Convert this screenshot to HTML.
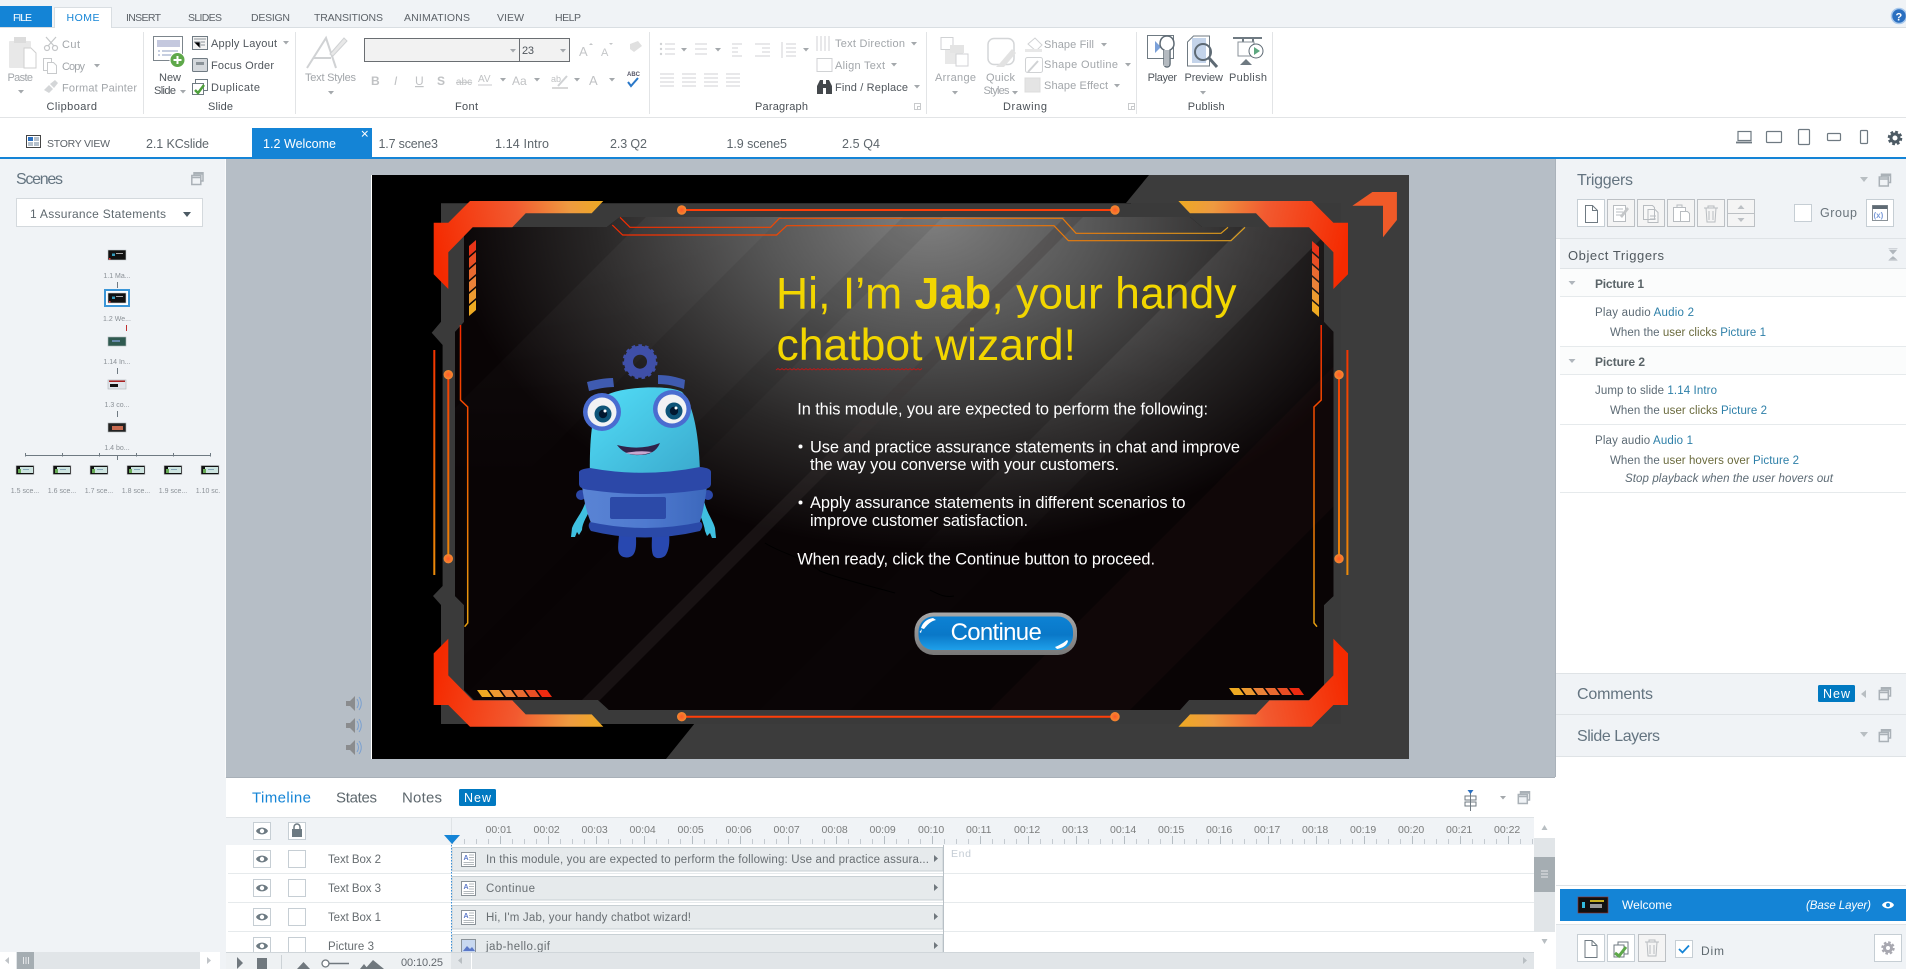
<!DOCTYPE html>
<html><head><meta charset="utf-8"><title>Storyline</title>
<style>
html,body{margin:0;padding:0;background:#fff;width:1906px;height:969px;overflow:hidden}
svg{display:block;position:absolute;left:0;top:0}
text{font-family:"Liberation Sans",sans-serif;font-size:11px;fill:#666c72;white-space:pre}
.r{font-size:11px;fill:#50565c}
.d{font-size:11px;fill:#a2a6aa}
.g{font-size:11px;fill:#4a5056}
.tb{font-size:10.5px;fill:#5c6268}
.st{font-size:12.5px;fill:#5e666c}
.h{font-size:16px;fill:#647480}
.tg{font-size:11.5px;fill:#5c6a74}
.bl{fill:#2d7fa8}
.ol{fill:#6a6a3c}
.tm{font-size:10.5px;fill:#7a7c7c}
.nm{font-size:11.5px;fill:#666c70}
.br{font-size:11.5px;fill:#686e72}
.sm{font-size:7px;fill:#8a9096}
.w{fill:#fff}
.sl{font-size:16.4px;fill:#fff}
.ti{font-size:44.5px;fill:#f2d600}
</style></head><body>
<svg width="1906" height="969" viewBox="0 0 1906 969" xmlns="http://www.w3.org/2000/svg">
<defs>
<path id="c" d="M-3 0h6l-3 3.5z" fill="#a4a8ac"/>
<g id="dock" fill="none" stroke="#aab1b7" stroke-width="1.5"><path d="M3 3V.8h9V9h-2"/><rect x=".8" y="3.5" width="9" height="9" fill="#f0f3f6"/><path d="M.8 5.5h9M3 2h9" /></g>
<g id="eye"><path d="M-6 0C-4-4.5 4-4.5 6 0C4 4.5-4 4.5-6 0z" fill="#6d7a82"/><circle r="2.2" fill="#fff"/></g>
<g id="page"><path d="M0 0h7l5 5v12H0z" fill="#fff" stroke="#6f7a82"/><path d="M7 0v5h5" fill="none" stroke="#6f7a82"/></g>
<g id="tbox"><rect x=".5" y=".5" width="14" height="14" fill="#fff" stroke="#8a9298"/><text x="2.5" y="8" style="font-size:7px;fill:#5a78c8;font-weight:bold">A</text><path d="M8 3h5M8 5.5h5M8 8h5M2.5 10.5h10.5M2.5 12.5h10.5" stroke="#9aa2a8" stroke-width=".8"/></g>
<linearGradient id="oh" gradientUnits="userSpaceOnUse" x1="434" x2="603" y1="240" y2="200"><stop offset="0" stop-color="#f52a00"/><stop offset=".5" stop-color="#f25a30"/><stop offset=".8" stop-color="#ee9a40"/><stop offset="1" stop-color="#edaa22"/></linearGradient>
<linearGradient id="cir" gradientUnits="userSpaceOnUse" x1="612" x2="1245" y1="0" y2="0"><stop offset="0" stop-color="#f52a00"/><stop offset=".6" stop-color="#f06a00"/><stop offset="1" stop-color="#dca020"/></linearGradient>
<linearGradient id="vl" gradientUnits="userSpaceOnUse" x1="0" x2="0" y1="325" y2="627"><stop offset="0" stop-color="#f52a00"/><stop offset=".55" stop-color="#f06a00"/><stop offset="1" stop-color="#e8a010"/></linearGradient>
<radialGradient id="dot"><stop offset="0" stop-color="#ff5a28"/><stop offset="1" stop-color="#f28a30"/></radialGradient>
<radialGradient id="pan" gradientUnits="userSpaceOnUse" cx="0" cy="0" r="1" gradientTransform="translate(930 215) scale(480 335)"><stop offset="0" stop-color="#808080"/><stop offset=".35" stop-color="#565656"/><stop offset=".7" stop-color="#282626"/><stop offset="1" stop-color="#090405"/></radialGradient>
<linearGradient id="fb" gradientUnits="userSpaceOnUse" x1="0" x2="0" y1="217" y2="560"><stop offset="0" stop-color="#fff" stop-opacity=".09"/><stop offset="1" stop-color="#fff" stop-opacity=".004"/></linearGradient>
<linearGradient id="fa" gradientUnits="userSpaceOnUse" x1="0" x2="0" y1="217" y2="480"><stop offset="0" stop-color="#fff" stop-opacity=".04"/><stop offset="1" stop-color="#fff" stop-opacity="0"/></linearGradient>
<clipPath id="pc"><polygon points="472,227 607,227 620,217 1190,217 1202,227 1309,227 1324,242 1324,322 1333.5,332 1333.5,596 1324,605 1324,685 1309,700 1189,700 1180,710 609,710 598,700 474,700 464,690 464,605 455,596 455,332 464,322 464,235"/></clipPath>
<linearGradient id="body" x1="0" x2="1" y1="0" y2="1"><stop offset="0" stop-color="#52def8"/><stop offset="1" stop-color="#3aa8cc"/></linearGradient>
<linearGradient id="skirt" x1="0" x2="1" y1="0" y2="0"><stop offset="0" stop-color="#5a84d4"/><stop offset=".5" stop-color="#4f7ad0"/><stop offset="1" stop-color="#3c68bc"/></linearGradient>
<linearGradient id="btn" x1="0" x2="0" y1="0" y2="1"><stop offset="0" stop-color="#0c82d4"/><stop offset=".55" stop-color="#0a78c8"/><stop offset="1" stop-color="#1ea0ea"/></linearGradient>
<linearGradient id="btb" x1="0" x2="0" y1="0" y2="1"><stop offset="0" stop-color="#a8a8a8"/><stop offset="1" stop-color="#787878"/></linearGradient>
<pattern id="ts" x="452" y="0" width="12" height="10" patternUnits="userSpaceOnUse"><rect width="1" height="10" fill="#c4cad0"/></pattern>
<pattern id="tl" x="452" y="0" width="48" height="10" patternUnits="userSpaceOnUse"><rect width="1" height="10" fill="#b4bcc2"/></pattern>
<g id="thA"><rect x="-9" y="-5" width="18" height="10" fill="#111" stroke="#c4c8cc" stroke-width=".6"/><rect x="-5" y="-1.5" width="3" height="2.5" fill="#39b"/><rect x="-1" y="-2" width="7" height="1" fill="#aaa"/><rect x="-8" y="3" width="1.5" height="1.5" fill="#e33"/></g>
<g id="thB"><rect x="-9" y="-4.5" width="18" height="9" fill="#111" stroke="#c8ccd0" stroke-width=".6"/><rect x="-5" y="-3" width="13" height="6" fill="#cde4e0"/><rect x="-7" y="-1" width="3" height="4" fill="#6a5"/><rect x="-2" y="-1" width="6" height="1" fill="#8ab"/></g>
</defs>

<!-- base backgrounds -->
<rect width="1906" height="969" fill="#fff"/>
<rect width="1906" height="27" fill="#f0f3f6"/>
<rect y="27" width="1906" height="1" fill="#d9dee2"/>
<rect y="117" width="1906" height="1" fill="#e2e4e6"/>
<rect y="157" width="1906" height="2" fill="#1484d6"/>

<!-- top tabs -->
<rect x="0" y="6" width="52" height="21" fill="#1484d6"/>
<path d="M54.500 28V7.500H111.500V28" fill="#fff" stroke="#d9dee2"/>
<text x="13" y="21" textLength="19" class="tb w" style="fill:#fff">FILE</text>
<text x="66.500" y="21" textLength="33" class="tb" style="fill:#1484d6">HOME</text>
<text x="126" y="21" textLength="35" class="tb">INSERT</text>
<text x="188" y="21" textLength="34" class="tb">SLIDES</text>
<text x="251" y="21" textLength="39" class="tb">DESIGN</text>
<text x="314" y="21" textLength="69" class="tb">TRANSITIONS</text>
<text x="404" y="21" textLength="66" class="tb">ANIMATIONS</text>
<text x="497" y="21" textLength="27" class="tb">VIEW</text>
<text x="555" y="21" textLength="26" class="tb">HELP</text>
<circle cx="1899" cy="16" r="7.500" fill="#2a6fc0" stroke="#a8c8ec" stroke-width="1.500"/><text x="1895.500" y="20.500" style="font-size:11px;font-weight:bold;fill:#fff">?</text>

<!-- ribbon separators -->
<path d="M143.500 32V114M295.500 32V114M649.500 32V114M926.500 32V114M1136.500 32V114M1272.500 32V114" stroke="#e2e4e6"/>

<!-- clipboard -->
<rect x="9" y="41" width="22" height="27" fill="#e8e8e8" rx="1"/><rect x="14" y="37" width="12" height="6" fill="#dcdcdc"/><path d="M24 48h7l5 5v15H24z" fill="#fff" stroke="#cfcfcf"/>
<text x="7.500" y="81" textLength="25.500" class="d">Paste</text><use href="#c" x="21" y="90"/>
<g fill="none" stroke="#c4c6c8" stroke-width="1.200"><circle cx="47" cy="48" r="2.500"/><circle cx="55" cy="48" r="2.500"/><path d="M48 46L56 37M54 46L46 37"/></g>
<text x="62" y="48" textLength="18" class="d">Cut</text>
<g fill="#fff" stroke="#c8cacc"><path d="M43.500 58.500h8v12h-8z"/><path d="M47.500 62.500h6l3 3v8h-9z"/></g>
<text x="62" y="70" textLength="23" class="d">Copy</text><use href="#c" x="97" y="64"/>
<path d="M44 90l5-5 4 4-4 4zM50 84l5-4 3 3-4 5z" fill="#d4d6d8"/>
<text x="62" y="91.500" textLength="75" class="d">Format Painter</text>
<text x="46.500" y="110" textLength="50.500" class="g">Clipboard</text>

<!-- slide group -->
<rect x="153.500" y="36.500" width="29" height="24" fill="#fff" stroke="#7c858c"/><rect x="157" y="40" width="23" height="7" fill="#c4c8de"/><path d="M158 51h2M162 51h16M158 55h2M162 55h16" stroke="#8d9cc0"/>
<circle cx="177.500" cy="60" r="7.500" fill="#5ea84a" stroke="#fff"/><path d="M177.500 56v8M173.500 60h8" stroke="#fff" stroke-width="2"/>
<text x="159" y="81" textLength="22" class="r">New</text><text x="154" y="94" textLength="22" class="r">Slide</text><use href="#c" x="183" y="90"/>
<rect x="192.500" y="36.500" width="15" height="13" fill="#f4f4f4" stroke="#6f7a82"/><path d="M194 39h12M194 42h6v6M201 42h4M201 45h4" stroke="#8a9298"/>
<text x="211" y="47" textLength="66" class="r">Apply Layout</text><use href="#c" x="286" y="41"/>
<rect x="192.500" y="58.500" width="15" height="13" rx="1" fill="#d4d8dc" stroke="#6f7a82"/><rect x="196" y="62" width="8" height="3" fill="#8a9298"/>
<text x="211" y="69" textLength="63" class="r">Focus Order</text>
<rect x="195.500" y="79.500" width="12" height="11" fill="#fff" stroke="#6f7a82"/><rect x="192.500" y="83.500" width="11" height="11" fill="#fff" stroke="#6f7a82"/><path d="M195 90l3 3 6-8" stroke="#4ea03a" stroke-width="2.500" fill="none"/>
<text x="211" y="91" textLength="49" class="r">Duplicate</text>
<text x="208" y="110" textLength="25" class="g">Slide</text>

<!-- font -->
<path d="M307 68L326 38 336 68M313 58H331" fill="none" stroke="#d0d2d4" stroke-width="2"/><path d="M330 54l14-16 3 3-14 15z" fill="#e8e8e8" stroke="#d0d2d4"/>
<text x="305" y="81" textLength="51" class="d">Text Styles</text><use href="#c" x="331" y="91"/>
<rect x="364.500" y="38.500" width="155" height="23" fill="#f2f2f2" stroke="#6a6e72"/><rect x="519.500" y="38.500" width="50" height="23" fill="#f2f2f2" stroke="#6a6e72"/>
<use href="#c" x="513" y="49"/><use href="#c" x="563" y="49"/>
<text x="522" y="54" textLength="12" class="r">23</text>
<text x="579" y="56" style="font-size:13px;fill:#c4c6c8">A</text><path d="M589 45l2-2 2 2" fill="#c4c6c8"/>
<text x="601" y="56" style="font-size:11px;fill:#c4c6c8">A</text><path d="M609 43l2 2 2-2" fill="#c4c6c8"/>
<path d="M630 44l8-3 4 5-8 6-4-3z" fill="#e0e0e0"/>
<text x="371" y="85" style="font-size:12px;font-weight:bold;fill:#c0c2c4">B</text>
<text x="394" y="85" style="font-size:12px;font-style:italic;fill:#c0c2c4">I</text>
<text x="415" y="85" style="font-size:12px;fill:#c0c2c4;text-decoration:underline">U</text>
<text x="437" y="85" style="font-size:12px;font-weight:bold;fill:#c0c2c4">S</text>
<text x="456" y="85" style="font-size:10px;fill:#c0c2c4;text-decoration:line-through">abc</text>
<text x="478" y="82" style="font-size:10px;fill:#c0c2c4">AV</text>
<text x="512" y="85" style="font-size:12px;fill:#c0c2c4">Aa</text>
<text x="551" y="82" style="font-size:9px;fill:#c0c2c4">ab</text>
<text x="589" y="85" style="font-size:13px;fill:#c0c2c4">A</text>
<path d="M478 85h14" stroke="#c8cacc"/><path d="M552 88h16" stroke="#d8d8d8" stroke-width="2"/><path d="M558 86l9-10" stroke="#d0d2d4" stroke-width="2"/>
<use href="#c" x="503" y="78"/><use href="#c" x="537" y="78"/><use href="#c" x="577" y="78"/><use href="#c" x="612" y="78"/>
<text x="627" y="76" style="font-size:6px;font-weight:bold;fill:#556">ABC</text><path d="M628 82l3 4 7-8" fill="none" stroke="#2a78c8" stroke-width="2"/>
<text x="455" y="110" textLength="23" class="g">Font</text>

<!-- paragraph -->
<g stroke="#d0d2d4" fill="none"><path d="M665 44h10M665 49h10M665 54h10M695 44h12M695 49h12M695 54h12M732 44h10M732 48h6M732 52h6M732 56h10M755 44h15M762 48h8M762 52h8M755 56h15M786 44h10M786 48h10M786 52h10M786 56h10M782 42v16"/>
<path d="M660 80h14M660 84h14M660 88h14M660 92h14M682 80h14M682 84h14M682 88h14M682 92h14M704 80h14M704 84h14M704 88h14M704 92h14M726 80h14M726 84h14M726 88h14M726 92h14" transform="translate(0,-6)"/>
<path d="M817 36v15M821 36v15M825 36v15M829 36v15M817 58.500h15v13h-15z"/></g>
<g fill="#d0d2d4"><circle cx="661" cy="44" r="1.200"/><circle cx="661" cy="49" r="1.200"/><circle cx="661" cy="54" r="1.200"/></g>
<use href="#c" x="684" y="48"/><use href="#c" x="718" y="48"/><use href="#c" x="806" y="48"/>
<text x="835" y="47" textLength="70" class="d">Text Direction</text><use href="#c" x="914" y="42"/>
<text x="835" y="69" textLength="50" class="d">Align Text</text><use href="#c" x="894" y="63"/>
<path d="M817 94v-8l3-6h3v14zM832 94v-8l-3-6h-3v14zM823 84h3v4h-3z" fill="#44484c"/>
<text x="835" y="91" textLength="73" class="r">Find / Replace</text><use href="#c" x="917" y="85"/>
<text x="755" y="110" textLength="53" class="g">Paragraph</text>
<g fill="none" stroke="#c8cacc"><path d="M914.500 103.500h6v6h-6zM917.500 106.500h3v3h-3zM1128.500 103.500h6v6h-6zM1131.500 106.500h3v3h-3z"/></g>

<!-- drawing -->
<rect x="941" y="37.500" width="12" height="12" fill="#fff" stroke="#d0d2d4"/><rect x="945" y="50" width="18" height="14" fill="#e8e8e8"/><rect x="956" y="54" width="12" height="12" fill="#fff" stroke="#d0d2d4"/><rect x="950" y="45" width="14" height="8" fill="#e4e4e4"/>
<text x="935" y="81" textLength="41" class="d">Arrange</text><use href="#c" x="955" y="91"/>
<rect x="988" y="38.500" width="26" height="26" rx="6" fill="#fff" stroke="#d4d6d8" stroke-width="1.500"/><path d="M1000 63l12-14 4 4-12 14h-8z" fill="#e2e2e2"/>
<text x="986" y="81" textLength="29" class="d">Quick</text><text x="983.500" y="94" textLength="26" class="d">Styles</text><use href="#c" x="1015" y="91"/>
<path d="M1028 44l7-6 7 7-6 6z" fill="#fff" stroke="#d0d2d4"/><rect x="1025" y="49" width="17" height="3" fill="#e8e8e8"/>
<text x="1044" y="48" textLength="50" class="d">Shape Fill</text><use href="#c" x="1104" y="43"/>
<rect x="1025.500" y="57.500" width="17" height="15" rx="2" fill="#fff" stroke="#d0d2d4"/><path d="M1028 72l10-11" stroke="#d0d2d4" stroke-width="2"/>
<text x="1044" y="68" textLength="74" class="d">Shape Outline</text><use href="#c" x="1128" y="63"/>
<rect x="1025" y="78" width="15" height="14" fill="#e4e4e4" stroke="#dcdcdc"/>
<text x="1044" y="89" textLength="64" class="d">Shape Effect</text><use href="#c" x="1117" y="84"/>
<text x="1003" y="110" textLength="44" class="g">Drawing</text>

<!-- publish -->
<rect x="1147.500" y="35.500" width="26" height="23" fill="#fff" stroke="#6f7a82"/><path d="M1155 41v12l6-6z" fill="#7aa0d8"/><path d="M1167 36c-5 0-7 4-7 8 0 3 2 5 4 6v14c0 4 6 4 6 0V50c2-1 4-3 4-6 0-4-2-8-7-8z" fill="#fff" stroke="#5e6a74" stroke-width="1.500"/><rect x="1164" y="50" width="5" height="16" fill="#b4bac0"/>
<path d="M1187.500 42l6-6h16v30h-22z" fill="#fff" stroke="#6f7a82"/><rect x="1192" y="38" width="14" height="25" fill="#c4d4ea"/><circle cx="1203" cy="52" r="8" fill="none" stroke="#5e6a74" stroke-width="2"/><path d="M1209 58l8 9" stroke="#5e6a74" stroke-width="3"/>
<path d="M1233 38h29M1243 38v16M1253 38v6" stroke="#6f7a82" stroke-width="2" fill="none"/><path d="M1238 42h16v14h-16z" fill="#fff" stroke="#8a9298"/><circle cx="1256" cy="51" r="7" fill="#fff" stroke="#5e6a74"/><path d="M1254 47v8l6-4z" fill="#5ea880"/><path d="M1240 65l6-6 6 6z" fill="#6f7a82"/>
<text x="1147.600" y="81" textLength="29.500" class="r">Player</text>
<text x="1184.500" y="81" textLength="38.500" class="r">Preview</text><use href="#c" x="1203" y="91"/>
<text x="1229" y="81" textLength="38" class="r">Publish</text>
<text x="1187.800" y="110" textLength="36.800" class="g">Publish</text>

<!-- second tabs -->
<rect x="26.500" y="135.500" width="14" height="12" fill="#fff" stroke="#444"/><path d="M28 137h5v4h-5z" fill="#2a6fc0"/><path d="M34 137h5v4h-5zM28 142h5v4h-5zM34 142h5v4h-5z" fill="#b4c0cc"/>
<text x="47" y="147" textLength="63" class="tb" style="font-size:10.5px">STORY VIEW</text>
<rect x="252" y="128" width="120" height="30" fill="#1484d6"/>
<path d="M362 131l5.500 5.500M367.500 131L362 136.500" stroke="#fff"/>
<text x="146" y="148" textLength="63" class="st">2.1 KCslide</text>
<text x="263" y="148" textLength="73" class="st" style="fill:#fff">1.2 Welcome</text>
<text x="378.500" y="148" textLength="59.500" class="st">1.7 scene3</text>
<text x="495" y="148" textLength="54" class="st">1.14 Intro</text>
<text x="610" y="148" textLength="37" class="st">2.3 Q2</text>
<text x="726.500" y="148" textLength="60.500" class="st">1.9 scene5</text>
<text x="842" y="148" textLength="38" class="st">2.5 Q4</text>
<g fill="none" stroke="#6f7a82" stroke-width="1.200"><rect x="1738" y="131.500" width="13" height="9"/><path d="M1736 142.500h16" stroke-width="1.800"/><rect x="1766.500" y="131.500" width="15" height="11" rx="1"/><rect x="1798.500" y="129.500" width="11" height="15" rx="1"/><rect x="1827.500" y="133.500" width="13" height="7" rx="1"/><rect x="1860.500" y="130.500" width="7" height="13" rx="1"/></g>
<circle cx="1895" cy="138" r="4" fill="none" stroke="#4c5a64" stroke-width="3"/><circle cx="1895" cy="138" r="6.200" fill="none" stroke="#4c5a64" stroke-width="2.200" stroke-dasharray="2.800 2.070"/>

<!-- left panel -->
<rect x="0" y="159" width="226" height="793" fill="#f0f3f6"/>
<rect x="225" y="159" width="1" height="618" fill="#fafbfc"/>
<text x="16" y="184" textLength="47" class="h">Scenes</text><use href="#dock" x="191" y="172"/>
<rect x="16.500" y="198.500" width="186" height="28" fill="#fff" stroke="#d4d9dd"/>
<text x="30" y="218" textLength="136" style="font-size:12px;fill:#5e686e">1 Assurance Statements</text>
<path d="M183 212h8l-4 5z" fill="#4c5a64"/>
<use href="#thA" x="117" y="255"/><rect x="105" y="290" width="24" height="16" fill="#fff" stroke="#3a96d8" stroke-width="2"/><use href="#thA" x="117" y="298"/>
<rect x="108" y="337" width="18" height="9" fill="#2f5a50" stroke="#b0b8b8" stroke-width=".6"/><rect x="112" y="340" width="8" height="2" fill="#68a"/>
<rect x="108" y="380" width="18" height="9" fill="#e0e4ea" stroke="#b0b4b8" stroke-width=".6"/><rect x="109" y="380.500" width="16" height="1.500" fill="#a22"/><rect x="110" y="384" width="8" height="3" fill="#111"/>
<rect x="108" y="423" width="18" height="9" fill="#222" stroke="#b0b4b8" stroke-width=".6"/><rect x="112" y="426" width="11" height="4" fill="#c86a50"/>
<text x="117" y="278" class="sm" text-anchor="middle">1.1 Ma...</text>
<text x="117" y="321" class="sm" text-anchor="middle">1.2 We...</text>
<text x="117" y="364" class="sm" text-anchor="middle">1.14 In...</text>
<text x="117" y="407" class="sm" text-anchor="middle">1.3 co...</text>
<text x="117" y="450" class="sm" text-anchor="middle">1.4 bo...</text>
<text x="25" y="493" class="sm" text-anchor="middle">1.5 sce...</text>
<text x="62" y="493" class="sm" text-anchor="middle">1.6 sce...</text>
<text x="99" y="493" class="sm" text-anchor="middle">1.7 sce...</text>
<text x="136" y="493" class="sm" text-anchor="middle">1.8 sce...</text>
<text x="173" y="493" class="sm" text-anchor="middle">1.9 sce...</text>
<text x="208" y="493" class="sm" text-anchor="middle">1.10 sc.</text>
<path d="M117.500 282v6M117.500 368v6M117.500 411v6M117.500 456v4M25.500 453v3.500M62.500 453v3.500M99.500 453v3.500M136.500 453v3.500M173.500 453v3.500M210.500 453v3.500M25 455.500h186" stroke="#6f7a82" fill="none"/>
<path d="M126.500 325v6" stroke="#c03030"/>
<use href="#thB" x="25" y="470"/><use href="#thB" x="62" y="470"/><use href="#thB" x="99" y="470"/><use href="#thB" x="136" y="470"/><use href="#thB" x="173" y="470"/><use href="#thB" x="210" y="470"/>

<!-- left scroll -->
<rect x="0" y="952" width="226" height="17" fill="#e1e5e8"/><rect x="0" y="952" width="16" height="17" fill="#fff"/><rect x="200" y="952" width="20" height="17" fill="#fff"/><rect x="220" y="952" width="6" height="17" fill="#f0f3f6"/>
<rect x="17" y="952" width="17" height="17" fill="#a5adb2"/><path d="M23.500 957v7M26 957v7M28.500 957v7" stroke="#e6e8ea"/>
<path d="M9 957v7l-4-3.500zM207 957v7l4-3.500z" fill="#c0c4c8"/>

<!-- stage -->
<rect x="226" y="159" width="1329" height="618" fill="#b6bec6"/>
<rect x="371" y="175" width="1" height="584" fill="#fff"/>
<rect x="372" y="175" width="1037" height="584" fill="#000"/>
<polygon points="1149,175 1409,175 1409,759 666,759 695,723 1126,203" fill="#3c3c3c"/>
<polygon points="441,203.300 1341,203.300 1341,724 441,724 441,605 433,596 442.600,586 442.600,345 431.700,332.700 441,321.700" fill="#3a3a3a"/>
<rect x="441" y="203" width="690" height="1" fill="#2c2c2c"/>
<polygon points="472,227 607,227 620,217 1190,217 1202,227 1309,227 1324,242 1324,322 1333.500,332 1333.500,596 1324,605 1324,685 1309,700 1189,700 1180,710 609,710 598,700 474,700 464,690 464,605 455,596 455,332 464,322 464,235" fill="#000"/>
<g clip-path="url(#pc)">
<rect x="440" y="200" width="910" height="530" fill="url(#pan)"/>
<polygon points="663,200 799,200 279,720 143,720" fill="url(#fa)"/>
<polygon points="1270,200 1360,200 840,720 750,720" fill="url(#fb)"/>
<polygon points="920,200 960,200 440,720 400,720" fill="#000" opacity=".08"/>
<polygon points="1082,200 1100,200 580,720 562,720" fill="#3a3535" opacity=".3"/>
<polygon points="1500,200 1640,200 1120,720 980,720" fill="#301818" opacity=".18"/>
</g>
<!-- ghost crack -->
<path d="M765 543c15 10 40 15 55 28 20 8 50 15 75 22M930 590c8 4 15 8 24 6" stroke="#000" stroke-width="1" fill="none"/>

<!-- orange corners -->
<polygon fill="url(#oh)" points="470,201 603.300,201 591.700,213.300 525.700,213.300 512.300,227.300 472.700,227.300 448.300,252.300 448.300,289 433.700,274.300 433.700,222.700 448.300,222.700"/>
<g transform="matrix(-1 0 0 1 1781.700 0)"><polygon fill="url(#oh)" points="470,201 603.300,201 591.700,213.300 525.700,213.300 512.300,227.300 472.700,227.300 448.300,252.300 448.300,289 433.700,274.300 433.700,222.700 448.300,222.700"/></g>
<g transform="matrix(1 0 0 -1 0 927.700)"><polygon fill="url(#oh)" points="470,201 603.300,201 591.700,213.300 525.700,213.300 512.300,227.300 472.700,227.300 448.300,252.300 448.300,289 433.700,274.300 433.700,222.700 448.300,222.700"/></g>
<g transform="matrix(-1 0 0 -1 1781.700 927.700)"><polygon fill="url(#oh)" points="470,201 603.300,201 591.700,213.300 525.700,213.300 512.300,227.300 472.700,227.300 448.300,252.300 448.300,289 433.700,274.300 433.700,222.700 448.300,222.700"/></g>
<polygon points="1372.400,192 1396.900,192 1396.900,220 1383,237.300 1383,205.700 1352.400,205.700" fill="#f05a28"/>

<!-- lines -->
<path d="M684 210H1113M684 716.700H1113" stroke="#ff3e08" stroke-width="2"/>
<path d="M448.300 375V559M1339 375V559" stroke="url(#vl)" stroke-width="2" fill="none"/>
<path d="M434.300 350V575" stroke="url(#vl)" stroke-width="2"/><path d="M1347.400 350V575" stroke="url(#vl)" stroke-width="2"/>
<path d="M460.500 325V400L467.700 407V623L464.600 626.700" stroke="url(#vl)" stroke-width="1.500" fill="none"/>
<path d="M1321.200 325V400L1314 407V623L1317 626.700" stroke="url(#vl)" stroke-width="1.500" fill="none"/>
<path d="M620 217.300L630 227.300H770.700L779.300 218.300H1062.500L1076 233.300H1221L1228 227.300" stroke="url(#cir)" stroke-width="1.200" fill="none"/>
<path d="M612.300 225L622.700 235H776.700L786.700 225.700H1054L1068.400 240.700H1231L1245 227.300" stroke="url(#cir)" stroke-width="1.200" fill="none"/>
<g fill="url(#dot)"><circle cx="681.700" cy="210" r="4.700"/><circle cx="1115" cy="210" r="4.700"/><circle cx="681.700" cy="716.700" r="4.700"/><circle cx="1115" cy="716.700" r="4.700"/><circle cx="448.300" cy="374.700" r="4.700"/><circle cx="448.300" cy="558.700" r="4.700"/><circle cx="1339" cy="374.700" r="4.700"/><circle cx="1339" cy="558.700" r="4.700"/></g>

<!-- hash stripes -->
<g><polygon points="476,240 476,250 469,256 469,246" fill="#e83418"/><polygon points="476,252 476,262 469,268 469,258" fill="#e84e24"/><polygon points="476,264 476,274 469,280 469,270" fill="#e96a30"/><polygon points="476,276 476,286 469,292 469,282" fill="#ea8238"/><polygon points="476,288 476,298 469,304 469,294" fill="#ec9a30"/><polygon points="476,300 476,310 469,316 469,306" fill="#eeaa22"/></g>
<g transform="matrix(-1 0 0 1 1788 1)"><polygon points="476,240 476,250 469,256 469,246" fill="#e83418"/><polygon points="476,252 476,262 469,268 469,258" fill="#e84e24"/><polygon points="476,264 476,274 469,280 469,270" fill="#e96a30"/><polygon points="476,276 476,286 469,292 469,282" fill="#ea8238"/><polygon points="476,288 476,298 469,304 469,294" fill="#ec9a30"/><polygon points="476,300 476,310 469,316 469,306" fill="#eeaa22"/></g>
<g><polygon points="477,690 487,690 492,697 482,697" fill="#eeaa22"/><polygon points="489,690 499,690 504,697 494,697" fill="#ec9a30"/><polygon points="501,690 511,690 516,697 506,697" fill="#ea8238"/><polygon points="513,690 523,690 528,697 518,697" fill="#e96a30"/><polygon points="525,690 535,690 540,697 530,697" fill="#e84e24"/><polygon points="537,690 547,690 552,697 542,697" fill="#ee2a10"/></g>
<g transform="translate(752 -2)"><polygon points="477,690 487,690 492,697 482,697" fill="#eeaa22"/><polygon points="489,690 499,690 504,697 494,697" fill="#ec9a30"/><polygon points="501,690 511,690 516,697 506,697" fill="#ea8238"/><polygon points="513,690 523,690 528,697 518,697" fill="#e96a30"/><polygon points="525,690 535,690 540,697 530,697" fill="#e84e24"/><polygon points="537,690 547,690 552,697 542,697" fill="#ee2a10"/></g>

<!-- robot -->
<g>
<circle cx="640" cy="361.700" r="11.500" fill="none" stroke="#3f4fa8" stroke-width="9"/>
<circle cx="640" cy="361.700" r="16" fill="none" stroke="#3f4fa8" stroke-width="3" stroke-dasharray="3.500 3.200"/>
<path d="M587 382c8-2 17-4 26-4l1 9c-9 0-17 2-25 4z" fill="#3f5bb0"/>
<path d="M658 375c10 0 19 2 27 5l-1 9c-8-3-17-5-26-5z" fill="#3f5bb0"/>
<path d="M590 480C589 442 592 412 600 400C610 386 670 384 682 392C695 405 700 445 700 480Z" fill="url(#body)"/>
<path d="M586 500C583 512 575 520 572 528L571 537L575 537L577 532L579 535L582 530C582 522 590 512 592 505Z" fill="#3fc0e0"/>
<path d="M704 500C706 512 713 520 715 528L716 538L712 538L710 533L707 536L705 531C704 522 698 512 697 505Z" fill="#3fc0e0"/>
<circle cx="581" cy="495" r="5" fill="#2c48a8"/><circle cx="708" cy="495" r="5" fill="#2c48a8"/>
<path d="M619 534h17c0 8 1 16-3 21-4 4-12 3-14-2-2-5 0-13 0-19z" fill="#2848b0"/>
<path d="M652 534h17c1 8 0 17-4 22-4 3-10 3-12-1-2-5-1-14-1-21z" fill="#2848b0"/>
<path d="M582 486L707 486Q704 510 699 525Q645 537 592 525Q585 510 582 486Z" fill="url(#skirt)"/>
<path d="M590 522Q645 534 701 522Q704 526 700 531Q645 544 591 531Q587 526 590 522Z" fill="#2a49a8"/>
<path d="M579 472Q580 469 590 468Q645 478 700 467Q711 468 711 472L711 484Q711 489 700 490Q645 498 590 490Q579 489 579 484Z" fill="#2c48a8"/>
<rect x="610" y="497" width="56" height="22" rx="2" fill="#2c4aa8"/>
<circle cx="602" cy="412" r="19" fill="#4a6cd0"/><circle cx="602" cy="412" r="14.500" fill="#f2f2f4"/><circle cx="603" cy="414" r="8.500" fill="#0e5478"/><circle cx="603" cy="414" r="4.200" fill="#021830"/><circle cx="605" cy="411" r="1.500" fill="#fff"/>
<circle cx="672" cy="409" r="19" fill="#4a6cd0"/><circle cx="672" cy="409" r="14.500" fill="#f2f2f4"/><circle cx="674" cy="411" r="8.500" fill="#0e5478"/><circle cx="674" cy="411" r="4.200" fill="#021830"/><circle cx="676" cy="408" r="1.500" fill="#fff"/>
<path d="M617 445Q640 451 660 443Q655 455 640 455Q625 456 617 445z" fill="#30224a"/><path d="M625 453Q640 450 652 452Q640 457 625 453z" fill="#c8a8d0"/>
</g>

<!-- slide text -->
<text x="776" y="308.300" textLength="460.500" class="ti">Hi, I’m <tspan font-weight="bold">Jab</tspan>, your handy</text>
<text x="776.500" y="360" textLength="299.500" class="ti">chatbot wizard!</text>
<path d="M776 370l2-1.500 2 1.500 2-1.500 2 1.500 2-1.500 2 1.500 2-1.500 2 1.500 2-1.500 2 1.500 2-1.500 2 1.500 2-1.500 2 1.500 2-1.500 2 1.500 2-1.500 2 1.500 2-1.500 2 1.500 2-1.500 2 1.500 2-1.500 2 1.500 2-1.500 2 1.500 2-1.500 2 1.500 2-1.500 2 1.500 2-1.500 2 1.500 2-1.500 2 1.500 2-1.500 2 1.500 2-1.500 2 1.500 2-1.500 2 1.500 2-1.500 2 1.500 2-1.500 2 1.500 2-1.500 2 1.500 2-1.500 2 1.500 2-1.500 2 1.500 2-1.500 2 1.500 2-1.500 2 1.500 2-1.500 2 1.500 2-1.500 2 1.500 2-1.500 2 1.500 2-1.500 2 1.500 2-1.500 2 1.500 2-1.500 2 1.500 2-1.500 2 1.500 2-1.500 2 1.500 2-1.500 2 1.500 2-1.500" fill="none" stroke="#c01818" stroke-width=".8"/>
<text x="797.300" y="414.300" textLength="410.700" class="sl">In this module, you are expected to perform the following:</text>
<circle cx="800.500" cy="446.500" r="2" fill="#fff"/>
<text x="810" y="452.300" textLength="430" class="sl">Use and practice assurance statements in chat and improve</text>
<text x="810" y="470" textLength="309" class="sl">the way you converse with your customers.</text>
<circle cx="800.500" cy="502.500" r="2" fill="#fff"/>
<text x="810" y="508" textLength="375.500" class="sl">Apply assurance statements in different scenarios to</text>
<text x="810" y="526" textLength="218" class="sl">improve customer satisfaction.</text>
<text x="797.300" y="564.300" textLength="357.700" class="sl">When ready, click the Continue button to proceed.</text>

<!-- continue button -->
<rect x="914.500" y="612.500" width="162.500" height="42.500" rx="19" fill="url(#btb)"/>
<rect x="918.500" y="616.500" width="154.500" height="33.500" rx="15" fill="url(#btn)"/>
<path d="M921 628c2-6 6-9 12-10l3 2c-5 1-8 4-12 9zM919.500 632l2.500-3-1 4zM1057 649c5-1 10-3 11-8l-1-1c-2 2-7 5-12 7z" fill="#fff"/>
<text x="950.600" y="640" textLength="91.200" style="font-size:24px;fill:#fff">Continue</text>

<!-- speakers -->
<g><path d="M346 701h4l5-5v15l-5-5h-4z" fill="#8a8c8e"/><path d="M357 699c2 3 2 6 0 9M359 697c3 4 3 9 0 13" fill="none" stroke="#7aa0d0"/></g>
<g transform="translate(0 22)"><path d="M346 701h4l5-5v15l-5-5h-4z" fill="#8a8c8e"/><path d="M357 699c2 3 2 6 0 9M359 697c3 4 3 9 0 13" fill="none" stroke="#7aa0d0"/></g>
<g transform="translate(0 44)"><path d="M346 701h4l5-5v15l-5-5h-4z" fill="#8a8c8e"/><path d="M357 699c2 3 2 6 0 9M359 697c3 4 3 9 0 13" fill="none" stroke="#7aa0d0"/></g>

<!-- timeline -->
<rect x="226" y="777" width="1308" height="175" fill="#fff"/>
<rect x="226" y="777" width="1329" height="1" fill="#a8b0b8"/>
<text x="252" y="802.700" textLength="59" style="font-size:15px;fill:#1484d6">Timeline</text>
<text x="336" y="802.700" textLength="41" style="font-size:15px;fill:#5e686e">States</text>
<text x="402" y="802.700" textLength="40" style="font-size:15px;fill:#5e686e">Notes</text>
<rect x="459" y="789" width="37" height="17" rx="1.500" fill="#0079c1"/>
<text x="464" y="802" textLength="27" style="font-size:12.500px;fill:#fff">New</text>
<path d="M1470.500 793v18M1465 796h11v4h-11zM1465 802h11v4h-11z" fill="none" stroke="#6f7a82"/><path d="M1467.500 790h6l-3 4z" fill="#2a6fc0"/>
<use href="#c" x="1503" y="796"/><use href="#dock" x="1517.500" y="791"/>

<rect x="226" y="817" width="1308" height="28" fill="#f0f3f6"/><rect x="226" y="817" width="1308" height="1" fill="#dfe3e6"/>
<rect x="451" y="817" width="1" height="28" fill="#dfe3e6"/>
<g fill="#fff" stroke="#c6ced4"><rect x="253.500" y="822.500" width="17" height="17"/><rect x="288.500" y="822.500" width="17" height="17"/><rect x="253.500" y="850.500" width="17" height="17"/><rect x="288.500" y="850.500" width="17" height="17"/><rect x="253.500" y="879.500" width="17" height="17"/><rect x="288.500" y="879.500" width="17" height="17"/><rect x="253.500" y="908.500" width="17" height="17"/><rect x="288.500" y="908.500" width="17" height="17"/><rect x="253.500" y="937.500" width="17" height="17"/><rect x="288.500" y="937.500" width="17" height="17"/></g>
<use href="#eye" x="262" y="831"/><use href="#eye" x="262" y="859"/><use href="#eye" x="262" y="888"/><use href="#eye" x="262" y="917"/><use href="#eye" x="262" y="946"/>
<rect x="292" y="829" width="10" height="8" fill="#6d7a82"/><path d="M294 829v-2a3 3 0 0 1 6 0v2" fill="none" stroke="#6d7a82" stroke-width="1.500"/>
<path d="M228 873.500H1534M228 902.500H1534M228 931.500H1534" stroke="#e6eaec"/>
<text x="328" y="863" textLength="53" class="nm">Text Box 2</text>
<text x="328" y="892" textLength="53" class="nm">Text Box 3</text>
<text x="328" y="921" textLength="53" class="nm">Text Box 1</text>
<text x="328" y="950" textLength="46" class="nm">Picture 3</text>

<rect x="452" y="839" width="1082" height="5" fill="url(#ts)"/>
<rect x="452" y="836" width="1082" height="8" fill="url(#tl)"/>
<text x="485.500" y="833" class="tm">00:01</text><text x="533.500" y="833" class="tm">00:02</text><text x="581.500" y="833" class="tm">00:03</text><text x="629.500" y="833" class="tm">00:04</text><text x="677.500" y="833" class="tm">00:05</text><text x="725.500" y="833" class="tm">00:06</text><text x="773.500" y="833" class="tm">00:07</text><text x="821.500" y="833" class="tm">00:08</text><text x="869.500" y="833" class="tm">00:09</text><text x="918" y="833" class="tm">00:10</text><text x="966" y="833" class="tm">00:11</text><text x="1014" y="833" class="tm">00:12</text><text x="1062" y="833" class="tm">00:13</text><text x="1110" y="833" class="tm">00:14</text><text x="1158" y="833" class="tm">00:15</text><text x="1206" y="833" class="tm">00:16</text><text x="1254" y="833" class="tm">00:17</text><text x="1302" y="833" class="tm">00:18</text><text x="1350" y="833" class="tm">00:19</text><text x="1398" y="833" class="tm">00:20</text><text x="1446" y="833" class="tm">00:21</text><text x="1494" y="833" class="tm">00:22</text>

<!-- bars -->
<g fill="#e6eaec" stroke="#c8d0d4"><rect x="452" y="847.500" width="491" height="23.500"/><rect x="452" y="876.500" width="491" height="23.500"/><rect x="452" y="905.500" width="491" height="23.500"/><rect x="452" y="934.500" width="491" height="24"/></g>
<path d="M943.500 845V952" stroke="#b8c0c6"/>
<use href="#tbox" x="461" y="852"/><use href="#tbox" x="461" y="881"/><use href="#tbox" x="461" y="910"/>
<rect x="461.500" y="939.500" width="14" height="13" fill="#c8d8f0" stroke="#8a9298"/><path d="M463 951l4-5 3 3 2-2 3 4z" fill="#5a78c8"/>
<text x="486" y="863" textLength="443" class="br">In this module, you are expected to perform the following: Use and practice assura...</text>
<text x="486" y="892" textLength="49" class="br">Continue</text>
<text x="486" y="921" textLength="205" class="br">Hi, I'm Jab, your handy chatbot wizard!</text>
<text x="486" y="950" textLength="64" class="br">jab-hello.gif</text>
<path d="M934 855v7l4-3.500zM934 884v7l4-3.500zM934 913v7l4-3.500zM934 942v7l4-3.500z" fill="#70787e"/>
<text x="951" y="857" textLength="20" style="font-size:10.500px;fill:#c4ccd4">End</text>
<path d="M451.500 845V952" stroke="#3a90d8" stroke-dasharray="1.500 1.500"/>
<path d="M444 835h16l-8 9z" fill="#1484d6"/>

<!-- v scroll -->
<rect x="1534" y="817" width="21" height="135" fill="#e1e5e8"/>
<rect x="1534" y="817" width="21" height="21" fill="#fff"/><rect x="1534" y="932" width="21" height="20" fill="#fff"/>
<rect x="1534" y="857" width="21" height="35" fill="#a5adb2"/><path d="M1541 871h7M1541 874h7M1541 877h7" stroke="#e6e8ea"/>
<path d="M1544.500 825l-3 5h6zM1541.500 939h6l-3 5z" fill="#b8bec2"/>

<!-- bottom bar -->
<rect x="226" y="952" width="1308" height="17" fill="#e1e5e8"/><rect x="226" y="952" width="1308" height="1" fill="#d0d6da"/>
<rect x="226" y="953" width="225" height="16" fill="#eef1f3"/><rect x="451" y="953" width="20" height="16" fill="#e1e5e8"/><rect x="471" y="953" width="1" height="16" fill="#fff"/>
<path d="M237 957v12l6-6z" fill="#70787e"/><rect x="257" y="958" width="10" height="11" fill="#70787e"/><rect x="281" y="955" width="1" height="14" fill="#ccd2d6"/>
<path d="M297 969l6.500-7 6.500 7zM360 969l4-5 4 5zM365 969l8-9 11 9z" fill="#70787e"/>
<path d="M328 963.500h21" stroke="#70787e" stroke-width="1.500"/><circle cx="325.500" cy="963.500" r="3.500" fill="#fff" stroke="#70787e" stroke-width="1.300"/>
<text x="401" y="966" textLength="42" style="font-size:11px;fill:#62686e">00:10.25</text>
<path d="M462 957v7l-4-3.500zM1523 957v7l4-3.500z" fill="#b8bec2"/>

<!-- right panel -->
<rect x="1555" y="159" width="351" height="810" fill="#fff"/>
<rect x="1555" y="159" width="1" height="618" fill="#aab2ba"/>
<rect x="1556" y="159" width="350" height="79" fill="#f0f3f6"/><rect x="1556" y="238" width="350" height="1" fill="#dfe3e6"/>
<text x="1577" y="185" textLength="56" class="h">Triggers</text>
<path d="M1860 177h8l-4 5z" fill="#b8bec2"/><use href="#dock" x="1878.500" y="173.500"/>
<g fill="#f4f4f4" stroke="#bcc0c4"><rect x="1577.500" y="199.500" width="27" height="27" fill="#fff" stroke="#c6ced4"/><rect x="1607.500" y="199.500" width="27" height="27"/><rect x="1637.500" y="199.500" width="27" height="27"/><rect x="1667.500" y="199.500" width="27" height="27"/><rect x="1697.500" y="199.500" width="27" height="27"/><rect x="1727.500" y="199.500" width="27" height="27"/><path d="M1727.500 213.500h27" fill="none"/></g>
<use href="#page" x="1585.500" y="205.500"/>
<path d="M1613.500 205.500h12v16h-12zM1616 209h7M1616 212h7M1616 215h7" fill="#fff" stroke="#b8bcc0"/><path d="M1620 216l7-9 2 2-7 9z" fill="#c4c6c8"/>
<path d="M1643.500 205.500h9l2 2v12h-11zM1648 209.500h7l3 3v10h-10zM1650 216h6M1650 219h6" fill="#f8f8f8" stroke="#b8bcc0"/>
<path d="M1673.500 207.500h12v14h-12z" fill="#fff" stroke="#b8bcc0"/><path d="M1677 207v-2h5v2" fill="none" stroke="#b8bcc0"/><path d="M1680.500 211.500h7l2 2v8h-9z" fill="#fff" stroke="#b8bcc0"/>
<path d="M1704 208h14M1708 208v-2h6v2M1706 208l1 14h8l1-14M1709 211v9M1713 211v9" fill="none" stroke="#b8bcc0"/>
<path d="M1741 205l-3.500 4h7zM1737.500 218h7l-3.500 4z" fill="#bcc0c4"/>
<rect x="1794.500" y="204.500" width="17" height="17" fill="#fff" stroke="#c6ced4"/>
<text x="1820" y="217" textLength="37" style="font-size:12.500px;fill:#6a747c">Group</text>
<rect x="1866.500" y="199.500" width="27" height="27" fill="#fff" stroke="#c6ced4"/><rect x="1872.500" y="205.500" width="15" height="15" fill="#fff" stroke="#8a9298"/><rect x="1872.500" y="205.500" width="15" height="3.500" fill="#5e6a74"/><text x="1873.500" y="218" style="font-size:8px;font-weight:bold;fill:#7a9ad8">(x)</text>

<rect x="1560" y="239" width="346" height="29" fill="#f0f3f6"/><rect x="1560" y="268" width="346" height="1" fill="#dfe3e6"/>
<text x="1568" y="260" textLength="96" style="font-size:13px;fill:#50585e">Object Triggers</text>
<path d="M1888.500 248.500h9M1889.500 250h7l-3.500 4zM1893 256.500l-3.500 3h7zM1888.500 260.500h9" fill="#b0b6bc" stroke="#b0b6bc" stroke-width=".6"/>
<rect x="1560" y="269" width="346" height="27" fill="#fbfcfc"/><rect x="1560" y="296" width="346" height="1" fill="#e6eaec"/>
<rect x="1560" y="347" width="346" height="27" fill="#fbfcfc"/><path d="M1560 346.500h346M1560 374.500h346M1560 424.500h346M1560 492.500h346" stroke="#e6eaec"/>
<path d="M1568.500 281h7l-3.500 4zM1568.500 359h7l-3.500 4z" fill="#b0b6bc"/>
<text x="1595" y="288" textLength="49" style="font-size:12px;font-weight:bold;fill:#5a6468">Picture 1</text>
<text x="1595" y="316" textLength="99" class="tg">Play audio <tspan class="bl">Audio 2</tspan></text>
<text x="1610" y="336" textLength="156" class="tg">When the <tspan class="ol">user clicks</tspan> <tspan class="bl">Picture 1</tspan></text>
<text x="1595" y="366" textLength="50" style="font-size:12px;font-weight:bold;fill:#5a6468">Picture 2</text>
<text x="1595" y="394" textLength="122" class="tg">Jump to slide <tspan class="bl">1.14 Intro</tspan></text>
<text x="1610" y="414" textLength="157" class="tg">When the <tspan class="ol">user clicks</tspan> <tspan class="bl">Picture 2</tspan></text>
<text x="1595" y="444" textLength="98" class="tg">Play audio <tspan class="bl">Audio 1</tspan></text>
<text x="1610" y="464" textLength="189" class="tg">When the <tspan class="ol">user hovers over</tspan> <tspan class="bl">Picture 2</tspan></text>
<text x="1625" y="482" textLength="208" style="font-size:11.500px;font-style:italic;fill:#5c6a74">Stop playback when the user hovers out</text>

<rect x="1556" y="673" width="350" height="41" fill="#f0f3f6"/><path d="M1556 673.500h350M1556 714.500h350" stroke="#dfe3e6"/>
<rect x="1556" y="715" width="350" height="41" fill="#f0f3f6"/><rect x="1556" y="756" width="350" height="1" fill="#dfe3e6"/>
<text x="1577" y="699" textLength="76" class="h">Comments</text>
<text x="1577" y="741" textLength="83" class="h">Slide Layers</text>
<rect x="1818" y="685" width="37" height="17" rx="1.500" fill="#0079c1"/><text x="1823" y="698" textLength="27" style="font-size:12.500px;fill:#fff">New</text>
<path d="M1866 690v8l-5-4z" fill="#b8bec2"/><use href="#dock" x="1878.500" y="687"/>
<path d="M1860 732h8l-4 5z" fill="#b8bec2"/><use href="#dock" x="1878.500" y="729"/>
<rect x="1556" y="885" width="350" height="1" fill="#dfe3e6"/>
<rect x="1560" y="889" width="346" height="32" fill="#1484d6"/>
<rect x="1578" y="897" width="30" height="16" fill="#111" stroke="#a83020" stroke-width=".6"/><rect x="1582" y="902" width="3" height="6" fill="#3bd"/><rect x="1590" y="900" width="14" height="2" fill="#c8b020"/><rect x="1590" y="904" width="12" height="4" fill="#999"/>
<text x="1622" y="909" textLength="50" style="font-size:12px;fill:#fff">Welcome</text>
<text x="1806" y="909" textLength="65" style="font-size:11.500px;font-style:italic;fill:#fff">(Base Layer)</text>
<path d="M1882 905C1884 900.500 1892 900.500 1894 905C1892 909.500 1884 909.500 1882 905z" fill="#fff"/><circle cx="1888" cy="905" r="2" fill="#1484d6"/>
<rect x="1556" y="925" width="350" height="44" fill="#f0f3f6"/><rect x="1556" y="924" width="350" height="1" fill="#dfe3e6"/>
<rect x="1577.500" y="934.500" width="27" height="27" fill="#fff" stroke="#c6ced4"/><use href="#page" x="1585" y="940.500"/>
<rect x="1607.500" y="934.500" width="27" height="27" fill="#fff" stroke="#c6ced4"/><path d="M1618 942h10v12h-10z" fill="#fff" stroke="#6f7a82"/><path d="M1614 945h10v12h-10z" fill="#fff" stroke="#6f7a82"/><path d="M1615 953l4 3 7-9" fill="none" stroke="#5ea84a" stroke-width="3"/>
<rect x="1638.500" y="934.500" width="27" height="27" fill="#f4f4f4" stroke="#bcc0c4"/><path d="M1645 942h14M1649 942v-2h6v2M1647 942l1 14h8l1-14M1650 945v9M1654 945v9" fill="none" stroke="#b8bcc0"/>
<rect x="1675.500" y="940.500" width="17" height="17" fill="#fff" stroke="#c6ced4"/><path d="M1679 949l3.500 3.500 6.500-7" fill="none" stroke="#1484d6" stroke-width="1.800"/>
<text x="1701" y="955" textLength="23" style="font-size:12px;fill:#5e686e">Dim</text>
<rect x="1874.500" y="934.500" width="27" height="27" fill="#fff" stroke="#c6ced4"/><circle cx="1888" cy="948" r="3.500" fill="none" stroke="#a8a8b0" stroke-width="3"/><circle cx="1888" cy="948" r="5.700" fill="none" stroke="#a8a8b0" stroke-width="2" stroke-dasharray="2.600 1.870"/>
</svg>
</body></html>
